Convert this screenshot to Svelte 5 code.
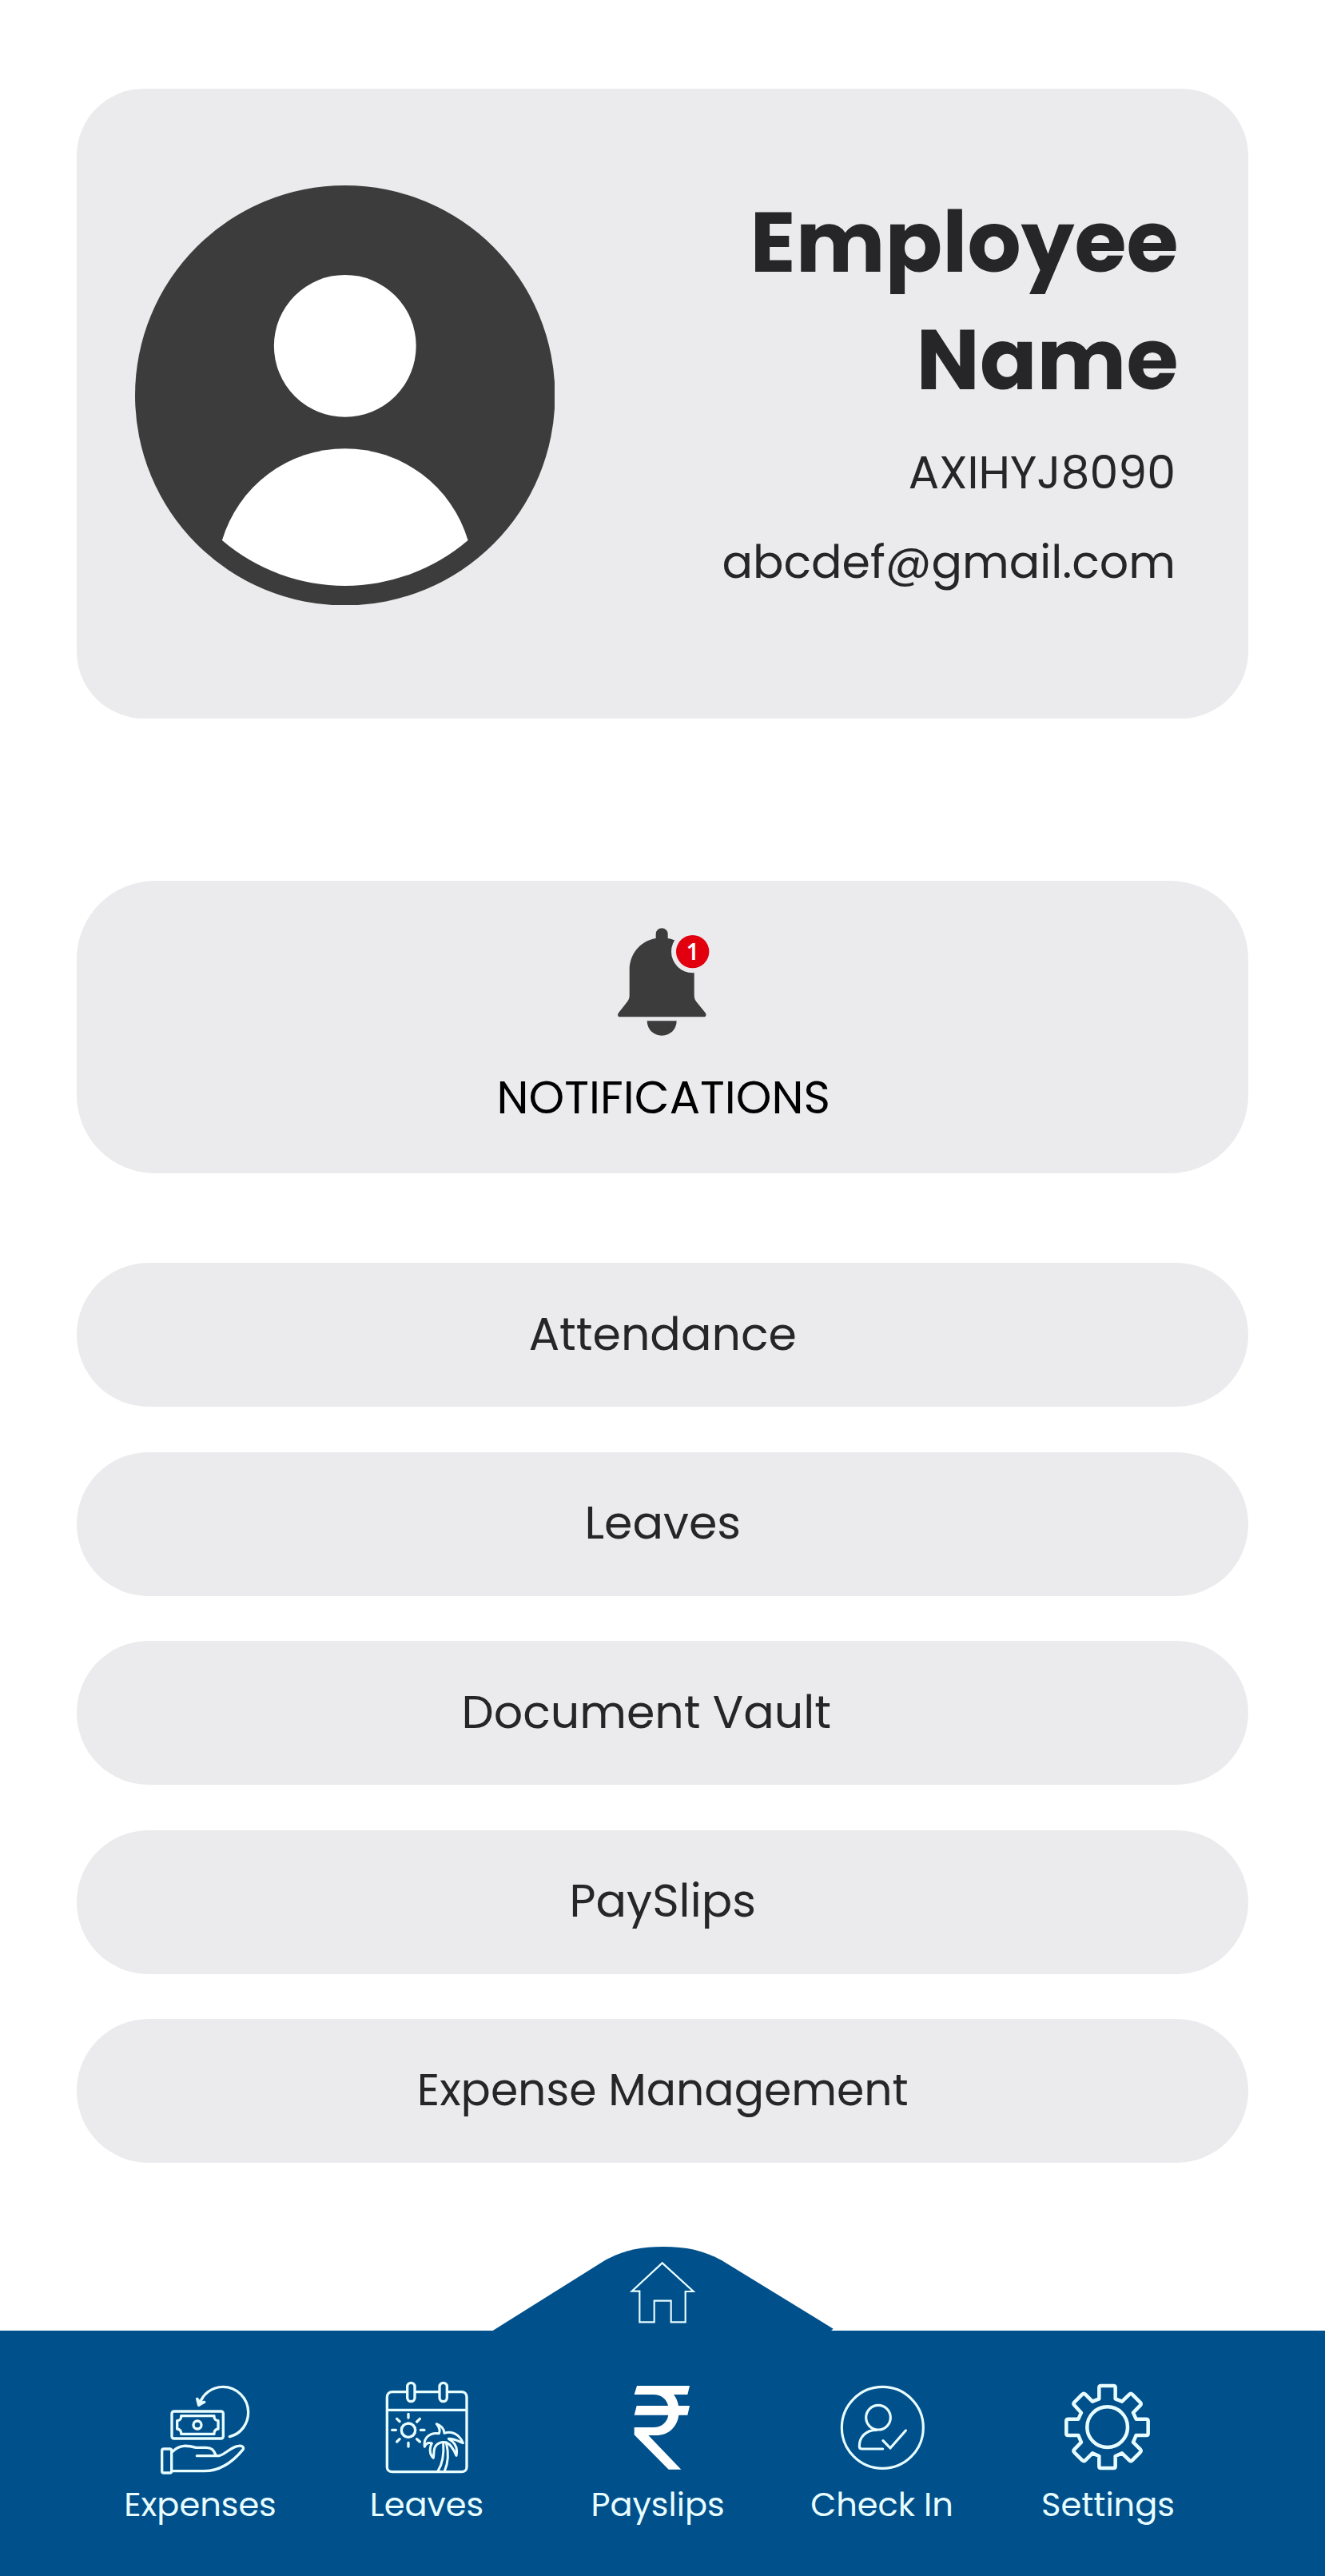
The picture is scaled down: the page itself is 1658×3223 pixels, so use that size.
<script>
  const employee = {
    name: 'Employee Name',
    id: 'AXIHYJ8090',
    email: 'abcdef@gmail.com'
  };

  const links = [
    { label: 'Attendance' },
    { label: 'Leaves' },
    { label: 'Document Vault', variant: 'shifted' },
    { label: 'PaySlips' },
    { label: 'Expense Management', variant: 'long' }
  ];
</script>

{#snippet expensesIcon()}
  <svg class="icon" viewBox="183 60 360 390" aria-hidden="true">
    <g class="line" stroke-width="10">
      <path d="M472 296C514 286 542 248 542 205C542 151 498 109 447 109C405 109 370 136 358 176" />
      <path d="M350 154L356 178L377 166L361 168Z" />
      <rect x="255" y="201" width="193" height="102" rx="8" />
      <path d="M290 218H414V222C414 230 421 236 429 236V267C421 267 414 274 414 282V286H290V282C290 274 283 267 275 267V236C283 236 290 230 290 222Z" />
      <circle cx="351" cy="252" r="15" />
      <rect x="218" y="342" width="36" height="90" rx="7" />
      <path d="M258 352C284 324 315 329 346 337H384C404 337 412 346 419 363" />
      <path d="M349 368H432C460 360 478 333 505 331C517 329 526 334 523 343C488 386 440 425 377 425H256" />
    </g>
  </svg>
{/snippet}

{#snippet leavesIcon()}
  <svg class="icon" viewBox="133 60 360 390" aria-hidden="true">
    <g class="line" stroke-width="10">
      <path d="M239 128H184C172 128 164 136 164 148V410C164 421 172 428 184 428H444C455 428 463 421 463 410V148C463 136 455 128 444 128H391M270 128H359M164 196H463" />
      <rect x="240" y="94" width="28" height="70" rx="14" />
      <rect x="361" y="94" width="28" height="70" rx="14" />
      <circle cx="244" cy="272" r="26" />
      <path d="M244 211V225M244 319V333M183 271H197M290 271H304M201 229L211 239M287 229L276 240M201 315L211 305M287 315L276 305" />
      <path stroke-width="9" d="M355 425C373 397 378 361 375 318M380 425C394 393 395 354 386 318" />
      <path stroke-width="9" d="M359 284C365 270 359 258 350 248C369 255 378 268 379 283C408 274 435 286 449 320C432 313 411 301 395 304C419 317 431 335 424 367C414 343 400 323 386 318C371 313 351 321 345 333C338 345 341 358 338 376C322 362 323 336 332 321C319 317 309 322 305 334C300 305 319 279 359 284Z" />
    </g>
  </svg>
{/snippet}

{#snippet payslipsIcon()}
  <svg class="icon" viewBox="550 540 360 390" aria-hidden="true">
    <path
      class="solid"
      d="M652 585H850L842 618H790C799 630 805 643 808 660H850L842 695H809C803 740 770 771 724 771H695L818 899H771L642 769V741H714C744 741 764 724 770 695H642L651 660H769C764 636 744 618 714 618H642Z"
    />
  </svg>
{/snippet}

{#snippet checkInIcon()}
  <svg class="icon" viewBox="192 60 360 390" aria-hidden="true">
    <g class="line" stroke-width="9.5">
      <circle cx="373" cy="262" r="153" />
      <circle cx="357" cy="224" r="46" />
      <path d="M350 271C312 271 286 296 286 332C286 339 289 342 296 342H374M375 311L402 339L460 273" />
    </g>
  </svg>
{/snippet}

{#snippet settingsIcon()}
  <svg class="icon" viewBox="171 60 360 390" aria-hidden="true">
    <g class="line" stroke-width="13.5">
      <path d="M316 154V112Q316 105 323 105H370Q377 105 377 112V154L402 164L430 137Q435 132 440 137L470 167Q476 173 471 178L444 206L455 230H493Q500 230 500 237V284Q500 291 493 291H455L444 317L471 344Q476 350 470 355L440 385Q435 390 430 385L402 358L377 369V407Q377 414 370 414H323Q316 414 316 407V369L291 358L264 385Q259 390 253 385L223 355Q217 350 223 344L249 317L238 291H200Q193 291 193 284V237Q193 230 200 230H238L249 206L223 178Q217 173 223 167L253 137Q259 132 264 137L291 164Z" />
      <circle cx="347" cy="260" r="76" />
    </g>
  </svg>
{/snippet}

<div class="screen">
  <main>
    <section class="card profile">
      <svg class="avatar" viewBox="0 0 526 526" aria-hidden="true">
        <circle cx="263" cy="263" r="263" fill="#3c3c3c" />
        <circle cx="263" cy="201" r="89" fill="#fff" />
        <path d="M109 444.500A160.600 160.600 0 0 1 417 444.500A237 237 0 0 1 109 444.500Z" fill="#fff" />
      </svg>
      <div class="details">
        <h1>{employee.name}</h1>
        <p>{employee.id}</p>
        <p>{employee.email}</p>
      </div>
    </section>

    <section class="card notifications">
      <svg class="bell" viewBox="508 200 360 432" aria-hidden="true">
        <g fill="#3c3c3c">
          <path d="M663 251V235A22.500 22.500 0 0 1 708 235V251C770 262 807 312 807 370V464C807 474 809 481 815 489L849 531C854 538 851 546 843 546H528C520 546 518 538 523 531L556 489C562 481 564 474 564 464V370C564 312 601 262 663 251Z" />
          <path d="M630 561H741C741 593 717 616 685.500 616C654 616 630 593 630 561Z" />
        </g>
        <circle cx="801" cy="301" r="80" fill="#ebebed" />
        <circle cx="801" cy="301" r="62" fill="#e2000f" />
        <text x="801" y="332" text-anchor="middle">1</text>
      </svg>
      <h2>NOTIFICATIONS</h2>
    </section>

    <div class="links">
      {#each links as link}
        <button class="pill {link.variant ?? ''}">{link.label}</button>
      {/each}
    </div>
  </main>

  <footer>
    <svg class="home" viewBox="0 63 1500 313.500" aria-hidden="true">
      <path
        d="M110 378L530 115C598 77 665 63 750 63S900 76 970 115L1388 371L1380 378Z"
        fill="#00508b"
      />
      <path
        class="house"
        d="M746 124L632 230H661V346H716V266H779V346H833V231H863Z"
      />
    </svg>
    <nav>
      <a href="#expenses">{@render expensesIcon()}<span>Expenses</span></a>
      <a href="#leaves">{@render leavesIcon()}<span>Leaves</span></a>
      <a href="#payslips">{@render payslipsIcon()}<span>Payslips</span></a>
      <a href="#checkin">{@render checkInIcon()}<span>Check In</span></a>
      <a href="#settings">{@render settingsIcon()}<span>Settings</span></a>
    </nav>
  </footer>
</div>

<style>
  :global(body) {
    margin: 0;
    background: #fff;
  }

  .screen {
    box-sizing: border-box;
    display: flex;
    flex-direction: column;
    width: 1658px;
    height: 3223px;
    padding-top: 111px;
    overflow: hidden;
    color: #262628;
    font-family: Poppins, Inter, sans-serif;
  }

  main {
    display: flex;
    flex-direction: column;
    width: 1466.5px;
    margin-left: 95.5px;
  }

  .card {
    box-sizing: border-box;
    background: #ebebed;
  }

  .profile {
    display: flex;
    justify-content: space-between;
    height: 788px;
    padding: 119px 87.5px 0 73px;
    border-radius: 84px;
  }

  .avatar {
    width: 525.5px;
    height: 525.5px;
    margin-top: 1.5px;
  }

  .details {
    width: 620px;
    text-align: right;
  }

  h1 {
    width: 540px;
    margin: 0 0 11px auto;
    font-size: 105.6px;
    font-weight: 700;
    line-height: 147px;
  }

  p {
    margin: 0 3.5px 0 0;
    font-size: 57px;
    line-height: 112px;
  }

  .notifications {
    display: flex;
    flex-direction: column;
    align-items: center;
    height: 366px;
    margin-top: 203px;
    padding-top: 54.7px;
    border-radius: 98px;
  }

  .bell {
    width: 120px;
    height: 144px;
  }

  .bell text {
    fill: #fff;
    font: 600 84px 'Noto Sans', sans-serif;
  }

  h2 {
    margin: 42px 0 0 3px;
    color: #000;
    font-size: 56.9px;
    font-weight: 400;
    line-height: 60px;
  }

  .links {
    display: flex;
    flex-direction: column;
    gap: 56.5px;
    margin-top: 112px;
  }

  .pill {
    height: 180px;
    padding: 0 0 1px 1px;
    border: 0;
    border-radius: 90px;
    background: #ebebed;
    color: inherit;
    font: 400 57px/1.5 Poppins, Inter, sans-serif;
    text-align: center;
  }

  .shifted {
    padding-right: 41px;
  }

  .long {
    font-size: 55.2px;
  }

  footer {
    margin-top: 105px;
  }

  .home {
    display: block;
    width: 500px;
    height: 104.5px;
    margin-left: 580px;
    overflow: visible;
  }

  .house {
    fill: none;
    stroke: #e8fdff;
    stroke-width: 6.5;
  }

  nav {
    box-sizing: border-box;
    display: grid;
    grid-template-columns: 284px 283px 295px 266px 300px;
    height: 307.5px;
    padding: 54.5px 0 0 108.5px;
    background: #00508b;
  }

  a {
    display: flex;
    flex-direction: column;
    align-items: center;
    gap: 8.5px;
    color: #e8fdff;
    font-size: 41.5px;
    line-height: 50px;
    text-decoration: none;
  }

  .icon {
    width: 120px;
    height: 130px;
    overflow: visible;
  }

  .line {
    fill: none;
    stroke: #e8fdff;
    stroke-linecap: round;
    stroke-linejoin: round;
  }

  .solid {
    fill: #fff;
  }
</style>
